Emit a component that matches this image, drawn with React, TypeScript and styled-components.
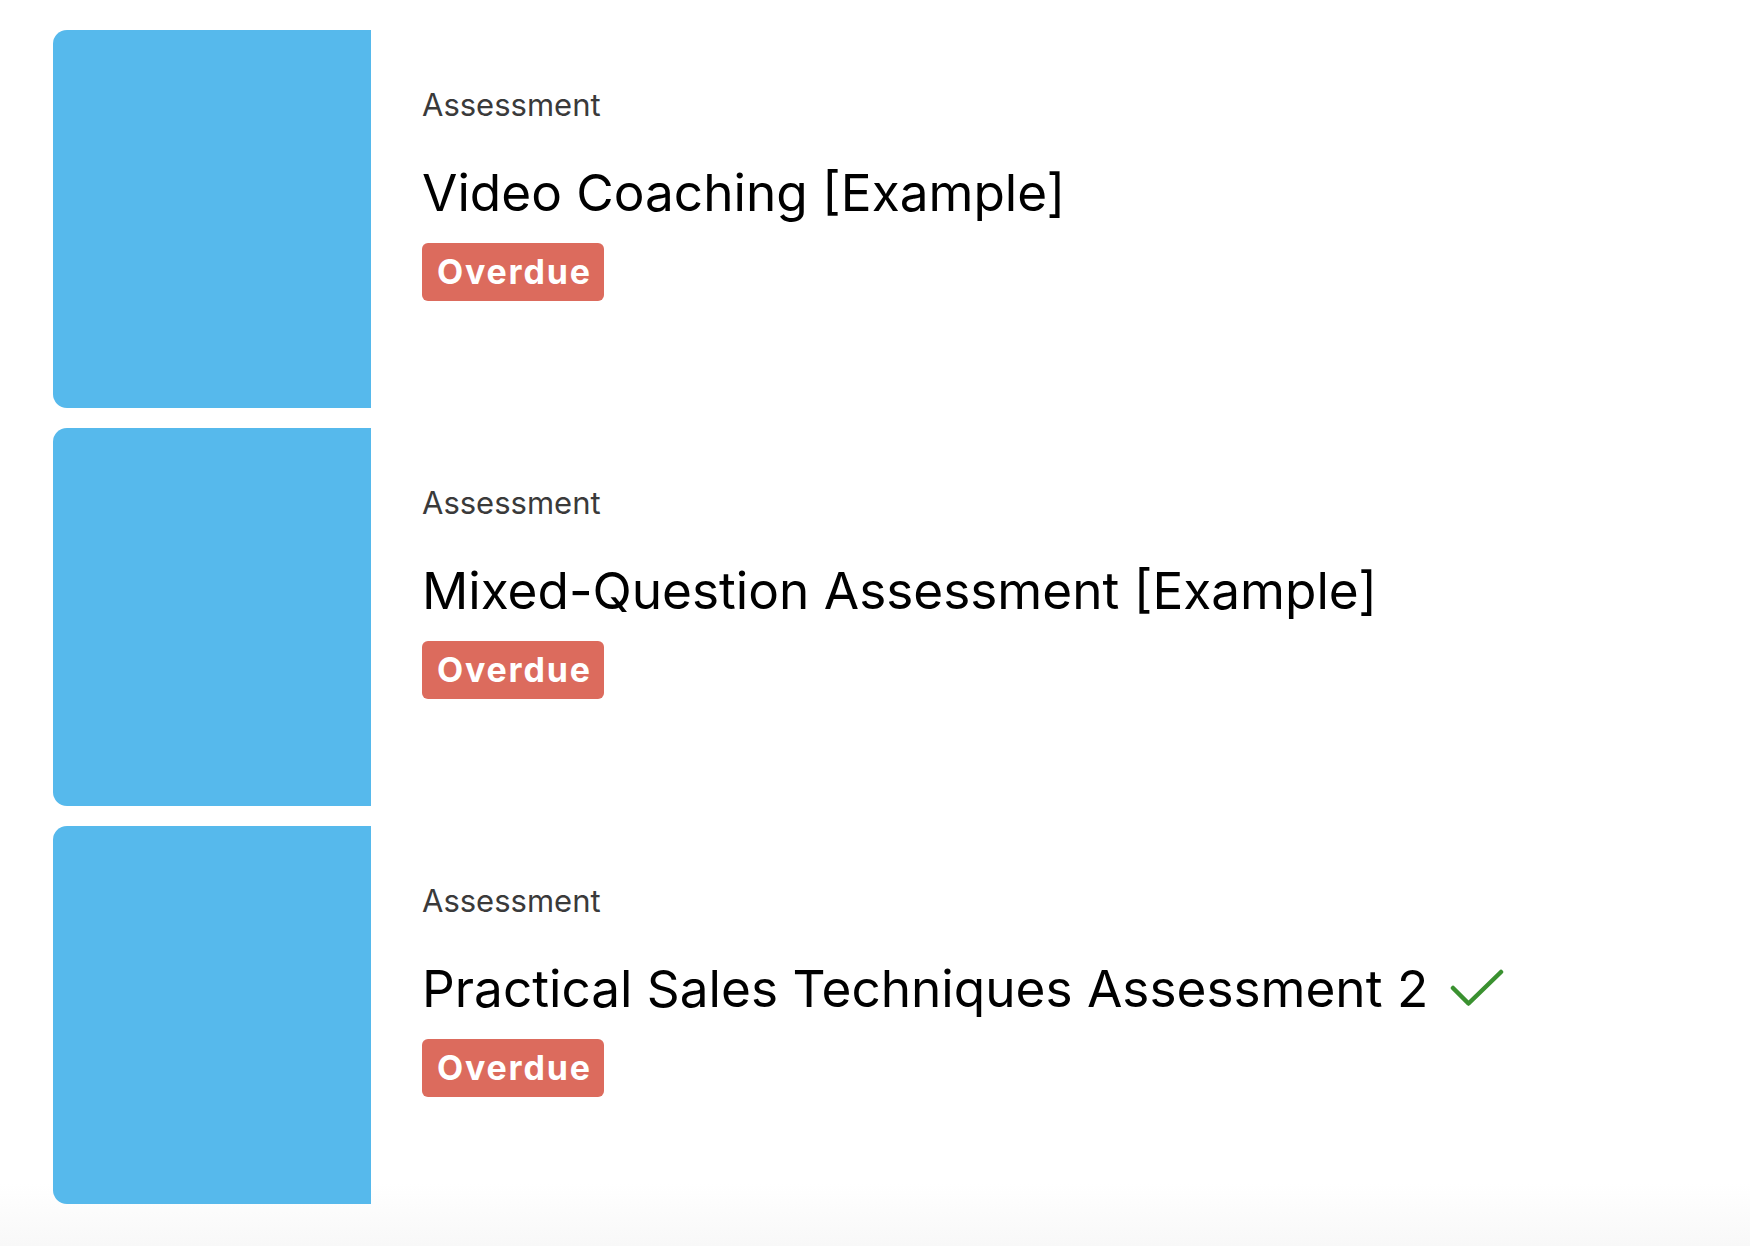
import styled, { createGlobalStyle } from "styled-components";

interface Item {
    kind: string;
    title: string;
    status: string;
    done?: boolean;
}

const items: Item[] = [
    { kind: "Assessment", title: "Video Coaching [Example]", status: "Overdue" },
    { kind: "Assessment", title: "Mixed-Question Assessment [Example]", status: "Overdue" },
    { kind: "Assessment", title: "Practical Sales Techniques Assessment 2", status: "Overdue", done: true },
];

const GlobalStyle = createGlobalStyle`
    html, body {
        margin: 0;
        padding: 0;
        background: #ffffff;
    }
    body {
        font-family: Inter, "Noto Sans", "Liberation Sans", sans-serif;
        -webkit-font-smoothing: antialiased;
    }
`;

const StyledPage = styled.main`
    min-height: 100vh;
    box-sizing: border-box;
    padding: 30px 0 0 53px;
    display: flex;
    flex-direction: column;
    gap: 20px;
    background: linear-gradient(to bottom, #ffffff 0, #ffffff calc(100% - 62px), #f8f8f8 100%);
`;

const StyledCard = styled.article`
    display: flex;
    height: 378px;
`;

const StyledThumb = styled.div`
    flex: 0 0 318px;
    height: 100%;
    background: #56b9ec;
    border-radius: 14px 0 0 14px;
`;

const StyledBody = styled.div`
    display: flex;
    flex-direction: column;
    align-items: flex-start;
    padding: 56px 0 0 51px;
`;

const StyledKind = styled.div`
    font-size: 31px;
    line-height: 38px;
    font-weight: 400;
    color: #3a3a3a;
`;

const StyledTitleRow = styled.div`
    display: flex;
    align-items: center;
    gap: 22px;
    margin-top: 37px;
`;

const StyledTitle = styled.h2`
    margin: 0;
    font-size: 51.3px;
    line-height: 62px;
    font-weight: 400;
    color: #000000;
`;

const StyledBadge = styled.span`
    margin-top: 20px;
    height: 58px;
    padding: 0 12px 0 15px;
    border-radius: 6px;
    background: #dc6b5d;
    color: #ffffff;
    font-size: 34px;
    line-height: 58px;
    font-weight: 700;
    letter-spacing: 1.8px;
`;

function CheckMark() {
    return (
        <svg width="54" height="40" viewBox="0 0 54 40" fill="none">
            <path d="M3 20 L18.5 35.5 L51 4" stroke="#3a9130" strokeWidth="4.5" strokeLinecap="round" strokeLinejoin="round" />
        </svg>
    );
}

function App() {
    return (
        <>
            <GlobalStyle />
            <StyledPage>
                {items.map((item, index) => (
                    <StyledCard key={index}>
                        <StyledThumb />
                        <StyledBody>
                            <StyledKind>{item.kind}</StyledKind>
                            <StyledTitleRow>
                                <StyledTitle>{item.title}</StyledTitle>
                                {item.done && <CheckMark />}
                            </StyledTitleRow>
                            <StyledBadge>{item.status}</StyledBadge>
                        </StyledBody>
                    </StyledCard>
                ))}
            </StyledPage>
        </>
    );
}

export default App;
